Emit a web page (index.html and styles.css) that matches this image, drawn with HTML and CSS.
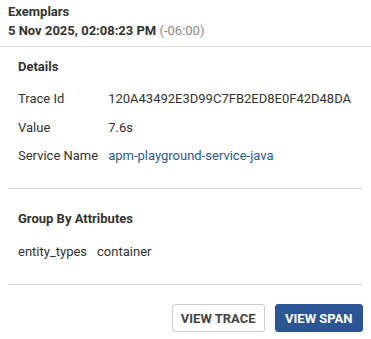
FILE: index.html
```html
<!DOCTYPE html>
<html lang="en">
<head>
    <meta charset="UTF-8">
    <meta name="viewport" content="width=device-width, initial-scale=1.0">
    <title>Exemplars</title>
    <link rel="stylesheet" href="styles.css">
</head>
<body>
    <div class="panel">
        <div class="header">
            <div class="title">Exemplars</div>
            <div class="time">5 Nov 2025, 02:08:23 PM <span class="zone">(-06:00)</span></div>
        </div>

        <div class="content">
            <div class="section">
                <h3>Details</h3>
                <div class="rows">
                    <div class="label">Trace Id</div>
                    <div class="value">120A43492E3D99C7FB2ED8E0F42D48DA</div>
                    <div class="label">Value</div>
                    <div class="value">7.6s</div>
                    <div class="label">Service Name</div>
                    <div class="value"><a href="#" class="link">apm-playground-service-java</a></div>
                </div>
            </div>

            <div class="section attrs">
                <h3>Group By Attributes</h3>
                <div class="rows">
                    <div class="label">entity_types</div>
                    <div class="value">container</div>
                </div>
            </div>

            <div class="actions">
                <button class="btn btn-outline">View Trace</button>
                <button class="btn btn-primary">View Span</button>
            </div>
        </div>
    </div>
</body>
</html>
```

FILE: styles.css
```css
body {
    margin: 0;
    font-family: Roboto, "Liberation Sans", sans-serif;
    font-size: 13px;
    color: #333;
    background: #fff;
}

.panel {
    width: 371px;
}

.header {
    height: 47px;
    box-sizing: border-box;
    padding: 4px 8px 0;
    border-bottom: 1px solid #e0e0e0;
}

.title {
    font-weight: bold;
    line-height: 16px;
    margin-bottom: 3px;
}

.time {
    font-weight: bold;
    line-height: 16px;
}

.zone {
    font-weight: normal;
    color: #888;
}

.content {
    padding: 0 8px;
}

.section {
    padding: 12px 10px 24px;
    border-bottom: 1px solid #d6d6d6;
}

.section.attrs {
    padding: 22px 10px 24px;
}

h3 {
    margin: 0 0 16px;
    font-size: 13px;
    line-height: 16px;
}

.attrs h3 {
    margin-bottom: 17px;
}

.rows {
    display: grid;
    grid-template-columns: auto 1fr;
    column-gap: 10px;
    row-gap: 12.5px;
}

.rows .label {
    line-height: 16px;
    min-width: 80px;
}

.attrs .rows .label {
    min-width: 0;
}

.rows .value {
    line-height: 16px;
}

.link {
    color: #2b5797;
    text-decoration: none;
}

.actions {
    display: flex;
    justify-content: flex-end;
    gap: 10px;
    padding-top: 19px;
}

.btn {
    font-family: Roboto, "Liberation Sans", sans-serif;
    font-size: 13px;
    font-weight: bold;
    text-transform: uppercase;
    height: 28px;
    padding: 0 8px;
    border-radius: 3px;
    cursor: pointer;
}

.btn-outline {
    background: #fff;
    color: #444;
    border: 1px solid #ccc;
}

.btn-primary {
    padding: 0 9.5px;
    background: #2c5593;
    color: #fff;
    border: 1px solid #2c5593;
}
```
